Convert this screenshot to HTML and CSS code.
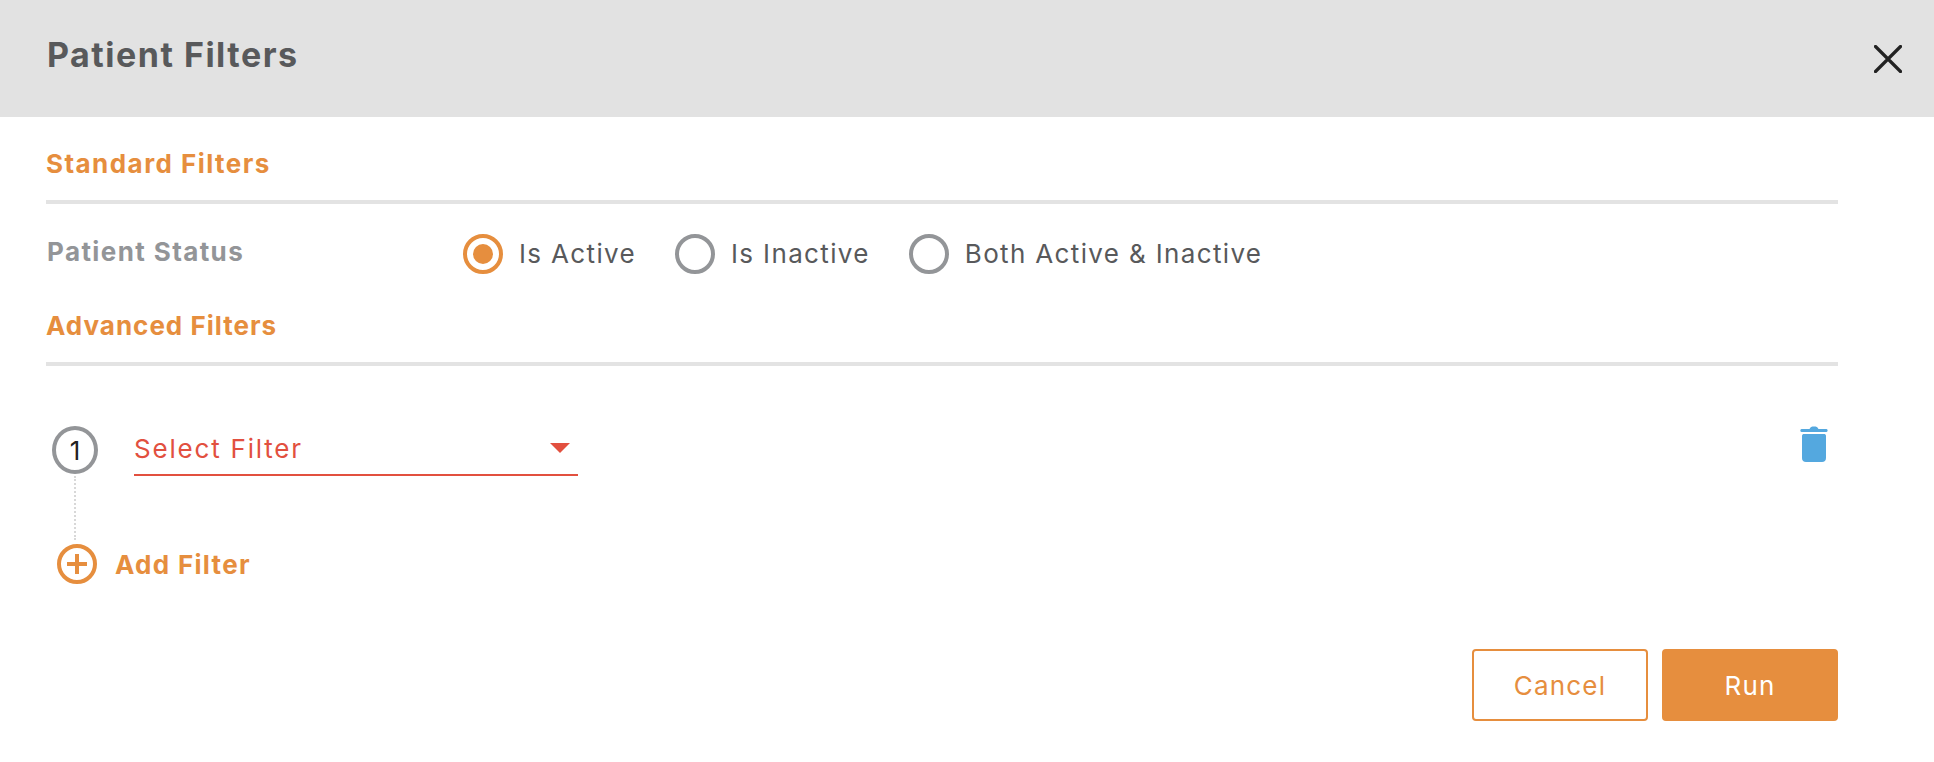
FILE: index.html
```html
<!DOCTYPE html>
<html lang="en">
<head>
<meta charset="utf-8">
<title>Patient Filters</title>
<link rel="stylesheet" href="styles.css">
</head>
<body>
<header class="header">
  <h1 class="title">Patient Filters</h1>
  <button class="close" aria-label="Close">
    <svg width="28" height="28" viewBox="0 0 28 28"><path d="M1.500 1.500L26.500 26.500M26.500 1.500L1.500 26.500" stroke="#222" stroke-width="3.2" stroke-linecap="round" fill="none"/></svg>
  </button>
</header>
<main class="content">
  <h2 class="section-title standard">Standard Filters</h2>
  <div class="status-row">
    <span class="status-label">Patient Status</span>
    <div class="radios">
      <label class="radio radio-active"><span class="radio-mark"></span><span>Is Active</span></label>
      <label class="radio"><span class="radio-mark"></span><span>Is Inactive</span></label>
      <label class="radio"><span class="radio-mark"></span><span>Both Active &amp; Inactive</span></label>
    </div>
  </div>
  <h2 class="section-title advanced">Advanced Filters</h2>
  <div class="filter-row">
    <div class="step-col">
      <span class="step">1</span>
      <span class="step-line"></span>
    </div>
    <div class="select">
      <span>Select Filter</span>
      <span class="caret"></span>
    </div>
    <svg class="trash" width="28" height="36" viewBox="0 0 28 36"><path d="M1.500 3H9.500C10.500 1 11.500 0.500 14 0.500C16.500 0.500 17.500 1 18.500 3H26.500C28 3 28 6 26.500 6H1.500C0 6 0 3 1.500 3Z" fill="#54a8df"/><path d="M2 10C2 8.500 3 8 4 8H24C25 8 26 8.500 26 10V32C26 34.500 24.500 36 22 36H6C3.500 36 2 34.500 2 32Z" fill="#54a8df"/></svg>
  </div>
  <div class="add-row">
    <svg width="40" height="40" viewBox="0 0 40 40"><circle cx="20" cy="20" r="18" fill="none" stroke="#e68e3e" stroke-width="4"/><path d="M20 10V30M10 20H30" stroke="#e68e3e" stroke-width="4" fill="none"/></svg>
    <span class="add-label">Add Filter</span>
  </div>
  <div class="actions">
    <button class="btn btn-outline">Cancel</button>
    <button class="btn btn-solid">Run</button>
  </div>
</main>
</body>
</html>
```
FILE: styles.css
```css
* { box-sizing: border-box; }
html, body { margin: 0; padding: 0; background: #fff; }
body { font-family: Inter, "Open Sans", sans-serif; color: #58595b; height: 762px; overflow: hidden; }
.header { height: 117px; background: #e2e2e2; display: flex; align-items: center; justify-content: space-between; padding: 0 32px 0 47px; }
.title { margin: 0 0 8px; font-size: 34px; line-height: 1; font-weight: 700; color: #58595b; letter-spacing: 1.5px; }
.close { border: 0; background: none; padding: 0; width: 28px; height: 28px; margin-top: 1px; display: block; }
.close svg { display: block; }
.content { width: 1838px; padding-left: 46px; }
.section-title { margin: 0; color: #e68e3e; font-size: 26px; line-height: 30px; font-weight: 700; border-bottom: 4px solid #e3e3e3; letter-spacing: 1.45px; }
.standard { padding: 32px 0 0; height: 87px; margin-bottom: 30px; }
.advanced { padding: 8px 0 0; height: 63px; letter-spacing: 1px; }
.status-row { display: flex; height: 69px; align-items: flex-start; }
.status-label { width: 417px; padding: 2px 0 0 1px; font-size: 26px; line-height: 32px; font-weight: 700; color: #939598; letter-spacing: 1.4px; }
.radios { display: flex; gap: 39px; }
.radio { display: flex; align-items: center; gap: 16px; font-size: 26px; line-height: 40px; color: #58595b; letter-spacing: 1.35px; }
.radio-mark { width: 40px; height: 40px; border: 4px solid #939598; border-radius: 50%; display: flex; align-items: center; justify-content: center; }
.radio-active .radio-mark { border-color: #e68e3e; }
.radio-active .radio-mark::after { content: ""; width: 20px; height: 20px; border-radius: 50%; background: #e68e3e; }
.filter-row { display: flex; align-items: flex-start; margin-top: 60px; padding-left: 6px; width: 1792px; }
.step-col { width: 46px; display: flex; flex-direction: column; align-items: center; }
.step { width: 46px; height: 48px; border: 4px solid #939598; border-radius: 50%; display: flex; align-items: center; justify-content: center; font-size: 26px; color: #222; }
.step-line { width: 0; height: 64px; margin-top: 2px; border-left: 2px dotted #d8d8d8; }
.select { width: 444px; height: 50px; margin-left: 36px; border-bottom: 2px solid #e2503f; color: #e2503f; font-size: 26px; line-height: 46px; letter-spacing: 1.8px; display: flex; justify-content: space-between; align-items: flex-start; padding-right: 8px; }
.caret { width: 0; height: 0; margin-top: 17px; border-left: 10px solid transparent; border-right: 10px solid transparent; border-top: 10px solid #e2503f; }
.trash { margin-left: auto; margin-right: 10px; }
.add-row { display: flex; align-items: center; gap: 18px; margin-top: 4px; padding-left: 11px; height: 40px; }
.add-row svg { display: block; }
.add-label { color: #e68e3e; font-size: 26px; font-weight: 700; letter-spacing: 1.3px; }
.actions { display: flex; justify-content: flex-end; gap: 14px; margin-top: 65px; }
.btn { width: 176px; height: 72px; border-radius: 4px; font-family: inherit; font-size: 26px; letter-spacing: 1.2px; border: 2px solid #e68e3e; }
.btn-outline { background: #fff; color: #e68e3e; }
.btn-solid { background: #e68e3e; color: #fff; }
```
